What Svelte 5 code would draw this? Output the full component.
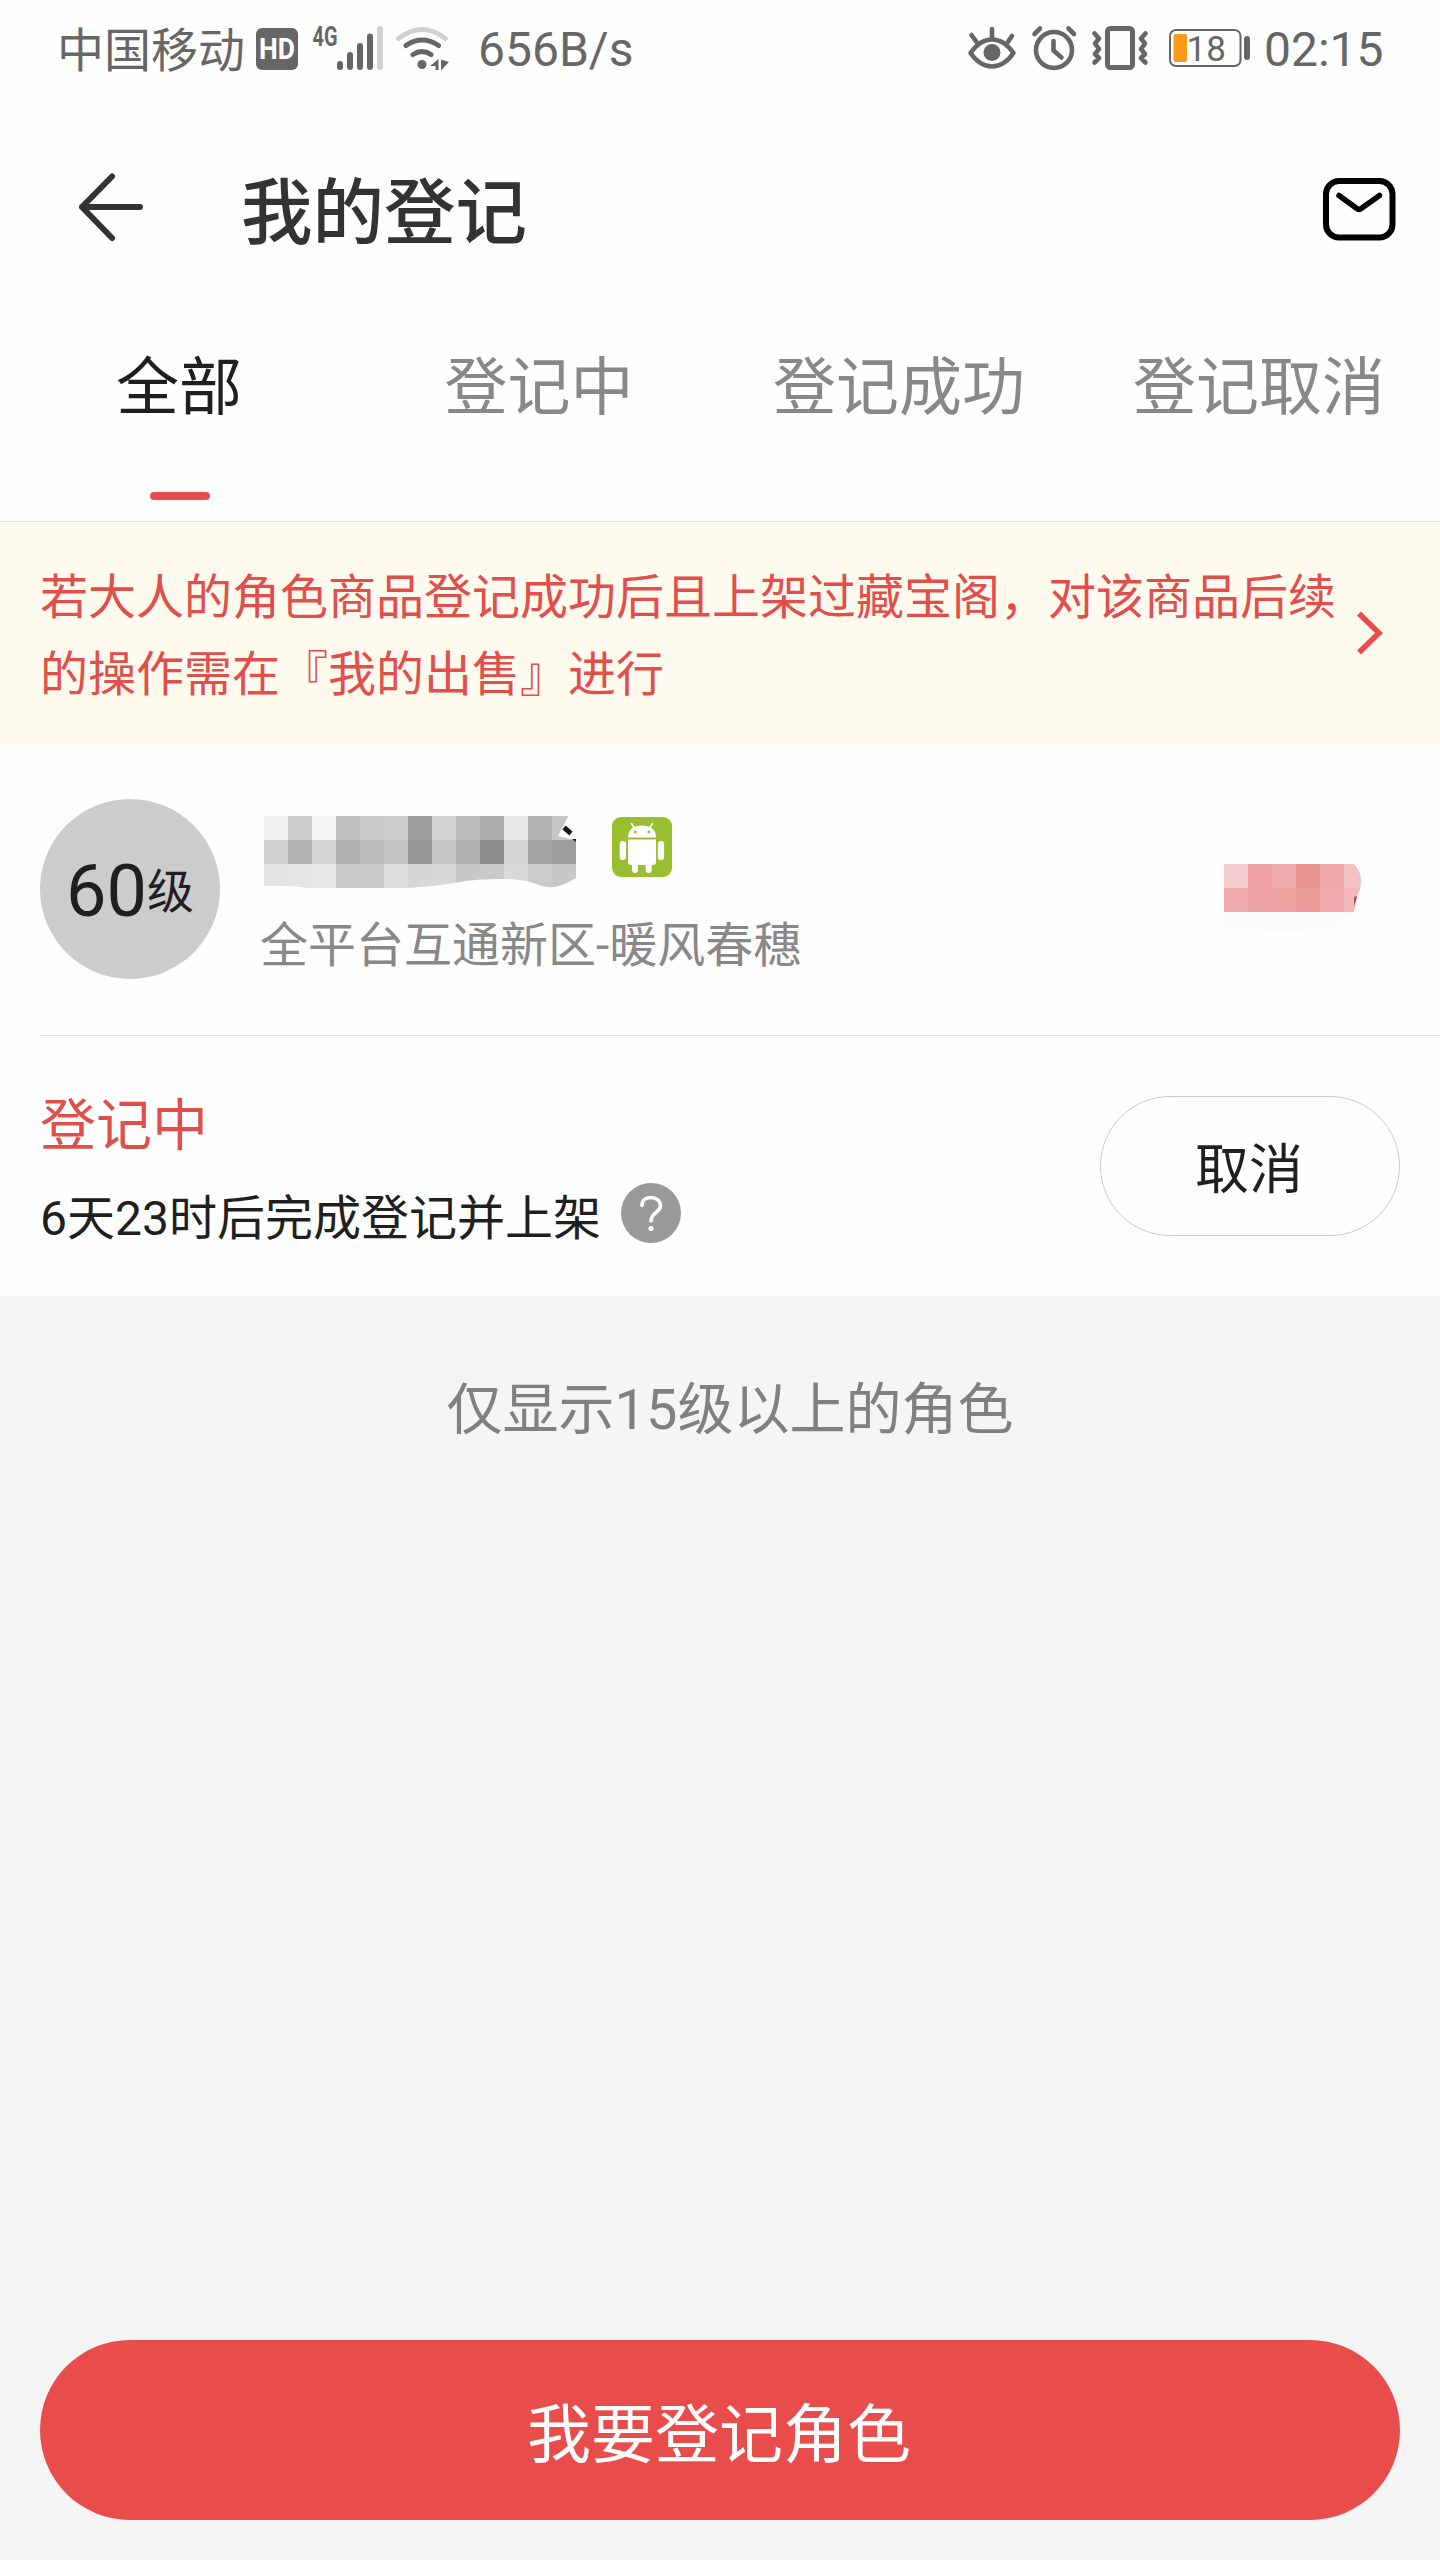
<script>
  const tabs = ['全部', '登记中', '登记成功', '登记取消'];
  let active = $state(0);

  // Grey levels of the pixelated role name, row by row
  const nameMosaic = [
    ['f0', 'cb', 'f5', 'c0', 'ca', 'cc', '9c', 'd3', 'bb', 'ae', 'e9', 'b4', 'c6'],
    ['d0', 'b5', 'd5', 'b0', 'bc', 'c3', '98', 'c8', 'af', '8d', 'd6', 'a4', '9d'],
    ['e3', 'e5', 'e8', 'c9', 'c9', 'dd', 'd6', 'd8', 'c8', 'c9', 'd9', 'cb', 'c8']
  ];
  // Colours of the pixelated price
  const priceMosaic = [
    ['#f5cfcf', '#f1a1a1', '#f0adae', '#eb9593', '#efa8a8', '#f4c2c3'],
    ['#eeaaac', '#eda3a4', '#eda2a0', '#e99a99', '#f0aaac', '#f2b9bb']
  ];
</script>

<div class="screen">
  <div class="status">
    <span class="carrier">中国移动</span>
    <svg class="signal" width="194" height="96" viewBox="256 0 194 96">
      <rect x="256" y="28" width="42" height="42" rx="6" fill="#666" />
      <text x="277" y="58.500" class="hd" text-anchor="middle" textLength="36" lengthAdjust="spacingAndGlyphs">HD</text>
      <text x="312.500" y="46" class="g4" textLength="25" lengthAdjust="spacingAndGlyphs">4G</text>
      <g fill="#666">
        <rect x="337" y="61" width="6" height="9" rx="3" />
        <rect x="347" y="52" width="6" height="18" rx="3" />
        <rect x="357" y="43" width="6" height="27" rx="3" />
        <rect x="367" y="33.500" width="6" height="36.500" rx="3" />
      </g>
      <rect x="377" y="26" width="6" height="44" rx="3" fill="#d0d0d0" />
      <g fill="none" stroke-width="5" stroke-linecap="round">
        <path d="M398.500 38.500Q422 20.500 445.500 38.500" stroke="#d0d0d0" />
        <path d="M406 45.500Q422 34.500 438.500 45.500" stroke="#666" />
        <path d="M413 54.500Q422 48.500 431 54.500" stroke="#666" />
      </g>
      <circle cx="422" cy="64.500" r="4.500" fill="#666" />
      <path d="M438.500 59v11h-3v-4h-5.500zM441 59.500v11l8-8.500z" fill="#666" />
    </svg>
    <span class="speed">656B/s</span>
    <svg class="indicators" width="294" height="96" viewBox="966 0 294 96">
      <g fill="none" stroke="#666" stroke-width="4.600" stroke-linecap="round" stroke-linejoin="round">
        <path d="M970.500 53Q980 39.500 992 39.500T1013.500 53Q1004 66.500 992 66.500T970.500 53z" />
        <path d="M992 29v9M971.500 35l5 7M1012 36l-4.500 6.500" />
        <circle cx="1054" cy="50" r="18" stroke-width="4.600" />
        <path d="M1053.500 41v9.500l8 7" />
        <path d="M1034.500 34l5.500-5.500M1068.500 28.500l5.500 5.500" />
        <path d="M1094.500 33.500l4.500 5-4 5 4 5.500-4 5 4 4-4.500 4.500M1145.500 33.500l-4.500 5 4 5-4 5.500 4 5-4 4 4.500 4.500" />
      </g>
      <circle cx="992" cy="52.500" r="8.500" fill="#666" />
      <rect x="1107.500" y="28.500" width="25" height="39" rx="3" fill="none" stroke="#666" stroke-width="5" />
      <rect x="1170" y="30" width="70.500" height="36" rx="6" fill="none" stroke="#666" stroke-width="2" />
      <rect x="1173.500" y="34" width="13.500" height="28" rx="2" fill="#fb9b18" />
      <text x="1186.500" y="61" class="level">18</text>
      <rect x="1244" y="36" width="6" height="24" rx="3" fill="#666" />
    </svg>
    <span class="clock">02:15</span>
  </div>

  <header class="header">
    <svg class="back" width="66" height="70" viewBox="0 0 66 70" fill="none" stroke="#333" stroke-width="6" stroke-linecap="round" stroke-linejoin="round">
      <path d="M34 4.500L4 35L34 66M4 35h58" />
    </svg>
    <h1>我的登记</h1>
    <svg class="mail" width="74" height="64" viewBox="0 0 74 64" fill="none" stroke="#000" stroke-linecap="round" stroke-linejoin="round">
      <rect x="4" y="4" width="66.500" height="56.500" rx="13" stroke-width="6" />
      <path d="M17 18.500l18.500 13.500q1.500 1 3 0L57.500 18.500" stroke-width="5.500" />
    </svg>
  </header>

  <nav class="tabs">
    {#each tabs as tab, i}
      <button class="tab" class:active={i === active} onclick={() => (active = i)}>
        <span>{tab}</span>
      </button>
    {/each}
  </nav>

  <div class="notice">
    <p>若大人的角色商品登记成功后且上架过藏宝阁，对该商品后续<br />的操作需在『我的出售』进行</p>
    <svg width="30" height="48" viewBox="0 0 30 48" fill="none" stroke="#e84d4c" stroke-width="5.500">
      <path d="M4 4.500L24 24L4 43.500" />
    </svg>
  </div>

  <section class="card">
    <div class="role">
      <div class="avatar"><b>60</b><i>级</i></div>
      <div class="info">
        <div class="name">
          <svg width="312" height="72" viewBox="0 0 312 72">
            <clipPath id="nameEdge">
              <path d="M0 0H304.500L294 20L312 24V62Q294 73 284 71C272 70 268 63 240 63C190 63 200 69 140 72H44Q25 69 0 70z" />
            </clipPath>
            <g clip-path="url(#nameEdge)" shape-rendering="crispEdges">
              {#each nameMosaic as row, y}
                {#each row as g, x}
                  <rect x={x * 24} y={y * 24} width="24" height="24" fill={`#${g}${g}${g}`} />
                {/each}
              {/each}
            </g>
            <path d="M300 11.500L307 17.500" stroke="#1a1a1a" stroke-width="5" />
            <path d="M308 23h4v3z" fill="#1a1a1a" />
          </svg>
          <svg class="android" width="60" height="60" viewBox="0 0 60 60">
            <rect width="60" height="60" rx="9" fill="#99bf31" />
            <g fill="#fff">
              <path d="M16 20.500C16 12 22 8.500 30 8.500S44 12 44 20.500z" />
              <path d="M16 22.500H44V45q0 3-3 3H19q-3 0-3-3z" />
              <rect x="7.700" y="24" width="6.300" height="19" rx="3.100" />
              <rect x="45.800" y="24" width="6.300" height="19" rx="3.100" />
              <path d="M20 46h6v7a3 3 0 0 1-6 0zM33.700 46h6v7a3 3 0 0 1-6 0z" />
            </g>
            <path d="M19.500 6.500l3 5M40.500 6.500l-3 5" stroke="#fff" stroke-width="1.600" stroke-linecap="round" />
            <circle cx="23.200" cy="15" r="1.400" fill="#99bf31" />
            <circle cx="36.800" cy="15" r="1.400" fill="#99bf31" />
          </svg>
        </div>
        <div class="server">全平台互通新区-暖风春穗</div>
      </div>
      <svg class="price" width="138" height="72" viewBox="0 0 138 72">
        <clipPath id="priceEdge">
          <path d="M0 0H130Q137 7 137 17Q137 25 133 32L130 48H0z" />
        </clipPath>
        <path d="M0 48H129Q124 64 100 65L0 72z" fill="#fefcfb" />
        <g clip-path="url(#priceEdge)">
          {#each priceMosaic as row, y}
            {#each row as color, x}
              <rect x={x * 24} y={y * 24} width="24" height="24" fill={color} shape-rendering="crispEdges" />
            {/each}
          {/each}
        </g>
        <path d="M130 33l3-1-1 5-2 5z" fill="#b84a55" />
      </svg>
    </div>

    <div class="state">
      <div class="progress">
        <div class="label">登记中</div>
        <div class="remain">
          <span>6天23时后完成登记并上架</span>
          <svg width="60" height="60" viewBox="0 0 60 60">
            <circle cx="30" cy="30" r="30" fill="#999" />
            <path d="M21 22.500C21 17 25 14.500 30 14.500S39.500 17.500 39.500 23C39.500 29 30 29.500 30 38" fill="none" stroke="#fff" stroke-width="3.600" stroke-linecap="round" />
            <circle cx="30" cy="45.500" r="2.600" fill="#fff" />
          </svg>
        </div>
      </div>
      <button class="cancel">取消</button>
    </div>
  </section>

  <p class="hint">仅显示15级以上的角色</p>

  <button class="submit">我要登记角色</button>
</div>

<style>
  :global(body) {
    margin: 0;
    background: #f5f5f5;
  }
  .screen {
    width: 1440px;
    height: 2560px;
    display: flex;
    flex-direction: column;
    overflow: hidden;
    background: #f5f5f5;
    color: #1f1f1f;
    font-family: Roboto, 'Noto Sans CJK SC', sans-serif;
  }
  svg {
    display: block;
    flex: none;
  }
  button {
    border: 0;
    padding: 0;
    margin: 0;
    background: none;
    font: inherit;
    color: inherit;
  }
  h1,
  p {
    margin: 0;
  }
  .status {
    height: 96px;
    display: flex;
    background: #fefefe;
    color: #666;
    font-size: 48px;
    line-height: 100px;
    white-space: nowrap;
  }
  .carrier {
    width: 256px;
    padding-left: 57px;
    box-sizing: border-box;
    font-size: 47px;
    line-height: 101px;
  }
  .speed {
    margin-left: 28px;
    width: 488px;
  }
  .clock {
    margin-left: 4px;
  }
  .hd {
    font: 700 30px Roboto, sans-serif;
    fill: #fff;
  }
  .g4 {
    font: 700 27px Roboto, sans-serif;
    fill: #666;
  }
  .level {
    font: 400 35px Roboto, sans-serif;
    fill: #666;
  }
  .header {
    height: 224px;
    display: flex;
    align-items: flex-start;
    padding: 76px 44px 0 78px;
    box-sizing: border-box;
    background: #fefefe;
  }
  h1 {
    flex: 1;
    margin-left: 97px;
    font-size: 71.500px;
    font-weight: 500;
    line-height: 84px;
    color: #333;
  }
  .mail {
    margin-top: 5px;
  }
  .tabs {
    height: 202px;
    box-sizing: border-box;
    display: grid;
    grid-template-columns: repeat(4, 1fr);
    border-bottom: 1px solid #e4e2e2;
    background: #fefefe;
  }
  .tab {
    display: flex;
    flex-direction: column;
    align-items: center;
    padding-top: 28px;
    font-size: 63px;
    line-height: 80px;
    color: #888;
  }
  .tab span {
    margin-right: 2px;
  }
  .tab.active {
    color: #1f1f1f;
  }
  .tab.active::after {
    content: '';
    width: 60px;
    height: 8px;
    margin-top: 64px;
    border-radius: 4px;
    background: #e84d4c;
  }
  .notice {
    height: 222px;
    box-sizing: border-box;
    display: flex;
    align-items: center;
    justify-content: space-between;
    padding: 0 55px 0 40px;
    background: #fffaee;
    color: #e04f4c;
    font-size: 48px;
    line-height: 77px;
    white-space: nowrap;
  }
  .notice p {
    padding-top: 6px;
  }
  .card {
    height: 552px;
    background: #fefefe;
  }
  .role {
    height: 292px;
    margin-left: 40px;
    box-sizing: border-box;
    display: flex;
    align-items: flex-start;
    padding-top: 55px;
    border-bottom: 1px solid #e1e1e1;
  }
  .avatar {
    width: 180px;
    height: 180px;
    border-radius: 50%;
    background: #ccc;
    display: flex;
    align-items: flex-start;
    justify-content: center;
  }
  .avatar b {
    font-size: 72px;
    font-weight: 400;
    line-height: 186px;
  }
  .avatar i {
    font-size: 47px;
    font-style: normal;
    line-height: 186px;
  }
  .info {
    flex: 1;
    padding: 17px 0 0 40px;
  }
  .name {
    display: flex;
    padding-left: 4px;
  }
  .android {
    margin: 1px 0 0 36px;
  }
  .server {
    margin-top: 28px;
    line-height: 60px;
    font-size: 48px;
    color: #888;
  }
  .price {
    margin: 65px 78px 0 0;
  }
  .state {
    height: 260px;
    box-sizing: border-box;
    display: flex;
    justify-content: space-between;
    align-items: flex-start;
    padding: 60px 40px 0;
  }
  .label {
    font-size: 56px;
    line-height: 60px;
    color: #e04f4c;
  }
  .remain {
    display: flex;
    gap: 20px;
    margin-top: 27px;
    font-size: 48px;
    line-height: 72px;
  }
  .cancel {
    width: 300px;
    height: 140px;
    box-sizing: border-box;
    padding: 0 2px 1px 0;
    border: 1px solid #ccc;
    border-radius: 70px;
    font-size: 54px;
  }
  .hint {
    padding: 74px 0 0 20px;
    font-size: 56px;
    line-height: 80px;
    text-align: center;
    color: #808080;
  }
  .submit {
    width: 1360px;
    height: 180px;
    margin: auto 40px 40px;
    padding: 0 2px 2px 0;
    border-radius: 90px;
    background: #e84d4b;
    color: #fff;
    font-size: 64px;
  }
</style>
